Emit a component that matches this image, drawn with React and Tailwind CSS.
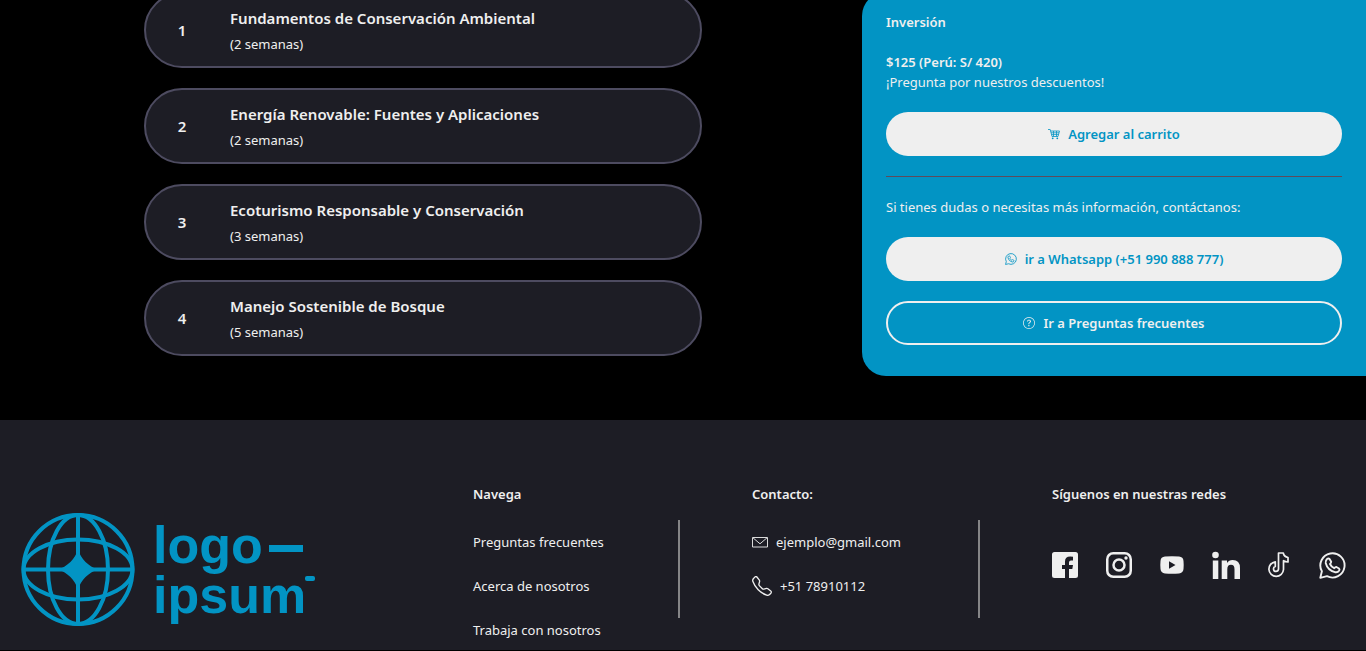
import React from "react";
import { BsTelephone, BsQuestionCircle } from "react-icons/bs";

const modules = [
  { title: "Fundamentos de Conservación Ambiental", length: "(2 semanas)" },
  { title: "Energía Renovable: Fuentes y Aplicaciones", length: "(2 semanas)" },
  { title: "Ecoturismo Responsable y Conservación", length: "(3 semanas)" },
  { title: "Manejo Sostenible de Bosque", length: "(5 semanas)" },
];

const navigation = ["Preguntas frecuentes", "Acerca de nosotros", "Trabaja con nosotros"];

function Logo() {
  return (
    <svg viewBox="0 0 296 114" className="h-[114px] w-[296px] text-[#0294c4]" role="img" aria-label="logo ipsum">
      <g fill="none" stroke="currentColor" strokeWidth="4">
        <circle cx="58" cy="57.5" r="54.5" />
        <ellipse cx="58" cy="57.5" rx="30" ry="54.5" />
        <ellipse cx="58" cy="57.5" rx="54.5" ry="30" />
        <path d="M58 3v109M3 57.5h110" />
      </g>
      <path
        fill="currentColor"
        d="M58 37.5C61 47 68.500 54.500 78 57.500C68.500 60.500 61 68 58 77.500C55 68 47.500 60.500 38 57.500C47.500 54.500 55 47 58 37.500Z"
      />
      <g fill="currentColor" className="font-['Liberation_Sans',sans-serif] text-[52px] font-bold">
        <text x="133" y="51">logo</text>
        <text x="133" y="101">ipsum</text>
      </g>
      <rect x="249" y="33" width="34" height="7" fill="currentColor" />
      <rect x="285" y="64" width="10" height="5" rx="2" fill="currentColor" />
    </svg>
  );
}

function CartIcon() {
  return (
    <svg viewBox="0 0 12 12" className="size-3" aria-hidden="true">
      <path
        fill="none"
        stroke="currentColor"
        strokeWidth="0.8"
        d="M0 1.500H2.200L4 8.500H10L11.500 3H2.600M3 4.800H11M3.600 6.600H10.500M5.500 3V8.500M8.500 3V8.500"
      />
      <circle cx="4.700" cy="10.300" r="0.900" fill="currentColor" />
      <circle cx="9.300" cy="10.300" r="0.900" fill="currentColor" />
    </svg>
  );
}

function WhatsappIcon({ className }) {
  return (
    <svg viewBox="0 0 27 27" className={className} aria-hidden="true">
      <g fill="none" stroke="currentColor" strokeWidth="1.900" strokeLinejoin="round">
        <path d="M1.300 25.800L2.900 19.300A12.100 12.100 0 1 1 8 24.200Z" />
        <path d="M8.300 6.700Q9.600 5.900 10.700 7.200L12.200 9.700Q12.300 10.800 11 12Q12.300 14.900 15.200 16.200Q16.400 14.800 17.400 15L20 16.500Q20.900 17.300 20.200 18.500Q18.700 20.800 16 20.200Q8.600 18.300 6.700 11Q6.300 8.200 8.300 6.700Z" />
      </g>
    </svg>
  );
}

function EnvelopeIcon() {
  return (
    <svg viewBox="0 0 16 12" className="h-3 w-4" aria-hidden="true">
      <path fill="none" stroke="currentColor" strokeWidth="0.900" d="M.5 1.500H15.500V11H.5ZM1 1.800L8 7.800L15 1.800" />
    </svg>
  );
}

function FacebookIcon() {
  return (
    <svg viewBox="0 0 26 26" className="size-[26px]" aria-hidden="true">
      <path
        fill="currentColor"
        d="M2.500 0H23.500Q26 0 26 2.500V23.500Q26 26 23.500 26H17V17H20.300L21 13H17V10.500Q17 8.500 19 8.500H21V4.700Q19.800 4.400 18.200 4.400Q13 4.400 13 9.500V13H10V17H13V26H2.500Q0 26 0 23.500V2.500Q0 0 2.500 0Z"
      />
    </svg>
  );
}

function InstagramIcon() {
  return (
    <svg viewBox="0 0 26 26" className="size-[26px]" aria-hidden="true">
      <g fill="none" stroke="currentColor" strokeWidth="2.5">
        <rect x="1.25" y="1.25" width="23.5" height="23.5" rx="6" />
        <circle cx="13" cy="13" r="5.5" />
      </g>
      <circle cx="20" cy="6" r="1.700" fill="currentColor" />
    </svg>
  );
}

function YoutubeIcon() {
  return (
    <svg viewBox="0 0 24 18" className="h-[18px] w-6" aria-hidden="true">
      <path
        fill="currentColor"
        fillRule="evenodd"
        d="M5 .6Q12 0 19 .6Q23.2 .9 23.5 5Q23.9 9 23.5 13Q23.2 17 19 17.4Q12 18 5 17.4Q.8 17 .5 13Q.1 9 .5 5Q.8 .9 5 .6ZM9 5.2V12.8L15.500 9Z"
      />
    </svg>
  );
}

function LinkedinIcon() {
  return (
    <svg viewBox="0 0 28 28" className="size-7" aria-hidden="true">
      <g fill="currentColor">
        <circle cx="3.500" cy="4" r="3.300" />
        <path d="M.8 9.500H6.300V28H.8Z" />
        <path d="M9.700 9.500H15V12Q16.800 9 20.600 9Q28 9 28 17V28H22.500V18.200Q22.500 13.800 19 13.800Q15.300 13.800 15.300 18.200V28H9.700Z" />
      </g>
    </svg>
  );
}

function TiktokIcon() {
  return (
    <svg viewBox="0 0 21 26" className="h-[26px] w-[21px]" aria-hidden="true">
      <path
        fill="none"
        stroke="currentColor"
        strokeWidth="1.700"
        strokeLinejoin="round"
        d="M10.500 1H15.300Q16 4.700 20 5.500V10Q17.500 10 15.500 8.700V17.500A7.300 7.300 0 1 1 7.300 9.800V14.500A2.500 2.500 0 1 0 10.500 17.200Z"
      />
    </svg>
  );
}

const networks = [
  { name: "Facebook", icon: <FacebookIcon /> },
  { name: "Instagram", icon: <InstagramIcon /> },
  { name: "YouTube", icon: <YoutubeIcon /> },
  { name: "LinkedIn", icon: <LinkedinIcon /> },
  { name: "TikTok", icon: <TiktokIcon /> },
  { name: "WhatsApp", icon: <WhatsappIcon className="size-[27px]" /> },
];

export default function App() {
  return (
    <div className="min-h-screen overflow-hidden bg-black font-['Noto_Sans',sans-serif] text-[13px] leading-5 text-[#efefef]">
      <main className="-mt-2 flex items-start justify-between pb-11">
        <ol className="ml-36 flex w-[558px] flex-col gap-5">
          {modules.map((item, index) => (
            <li
              key={item.title}
              className="flex h-[76px] items-center rounded-full border-2 border-[#4d4b60] bg-[#1d1d25]"
            >
              <span className="w-[72px] text-center text-[15px] font-semibold">{index + 1}</span>
              <div className="ml-3">
                <h3 className="text-[15px] leading-6 font-semibold">{item.title}</h3>
                <p className="mt-1">{item.length}</p>
              </div>
            </li>
          ))}
        </ol>

        <aside className="w-[504px] rounded-l-3xl bg-[#0294c4] px-6 pt-5 pb-[31px]">
          <h2 className="font-semibold">Inversión</h2>
          <p className="mt-5 font-semibold">$125 (Perú: S/ 420)</p>
          <p>¡Pregunta por nuestros descuentos!</p>
          <button className="mt-5 flex h-11 w-full items-center justify-center gap-2 rounded-full bg-[#efefef] font-semibold text-[#0294c4]">
            <CartIcon />
            Agregar al carrito
          </button>
          <hr className="my-5 border-[#5f4b5b]" />
          <p>Si tienes dudas o necesitas más información, contáctanos:</p>
          <button className="mt-5 flex h-11 w-full items-center justify-center gap-2 rounded-full bg-[#efefef] font-semibold text-[#0294c4]">
            <WhatsappIcon className="size-3" />
            ir a Whatsapp (+51 990 888 777)
          </button>
          <button className="mt-5 flex h-11 w-full items-center justify-center gap-2 rounded-full border-2 border-[#efefef] font-semibold">
            <BsQuestionCircle className="size-3" />
            Ir a Preguntas frecuentes
          </button>
        </aside>
      </main>

      <footer className="flex items-start gap-[72px] bg-[#1d1d25] px-5 pt-16 pb-2.5">
        <a href="#inicio" className="mt-7 mr-auto">
          <Logo />
        </a>
        <nav className="flex w-[207px] items-start justify-between">
          <div>
            <h4 className="font-semibold">Navega</h4>
            <ul className="mt-7 flex flex-col gap-6">
              {navigation.map((label) => (
                <li key={label}>
                  <a href="#inicio">{label}</a>
                </li>
              ))}
            </ul>
          </div>
          <span className="mt-9 h-[98px] w-0.5 bg-[#858587]" />
        </nav>
        <section className="flex w-[228px] items-start justify-between">
          <div>
            <h4 className="font-semibold">Contacto:</h4>
            <ul className="mt-7 flex flex-col gap-6">
              <li>
                <a href="mailto:ejemplo@gmail.com" className="flex items-center gap-2">
                  <EnvelopeIcon />
                  ejemplo@gmail.com
                </a>
              </li>
              <li>
                <a href="tel:+5178910112" className="flex items-center gap-2">
                  <BsTelephone className="size-5" />
                  +51 78910112
                </a>
              </li>
            </ul>
          </div>
          <span className="mt-9 h-[98px] w-0.5 bg-[#858587]" />
        </section>
        <section className="w-[294px]">
          <h4 className="font-semibold">Síguenos en nuestras redes</h4>
          <ul className="mt-11 flex h-[34px] items-center justify-between">
            {networks.map((network) => (
              <li key={network.name} className="flex w-7 justify-center first:justify-start last:justify-end">
                <a href="#inicio" aria-label={network.name} className="block">
                  {network.icon}
                </a>
              </li>
            ))}
          </ul>
        </section>
      </footer>
    </div>
  );
}
